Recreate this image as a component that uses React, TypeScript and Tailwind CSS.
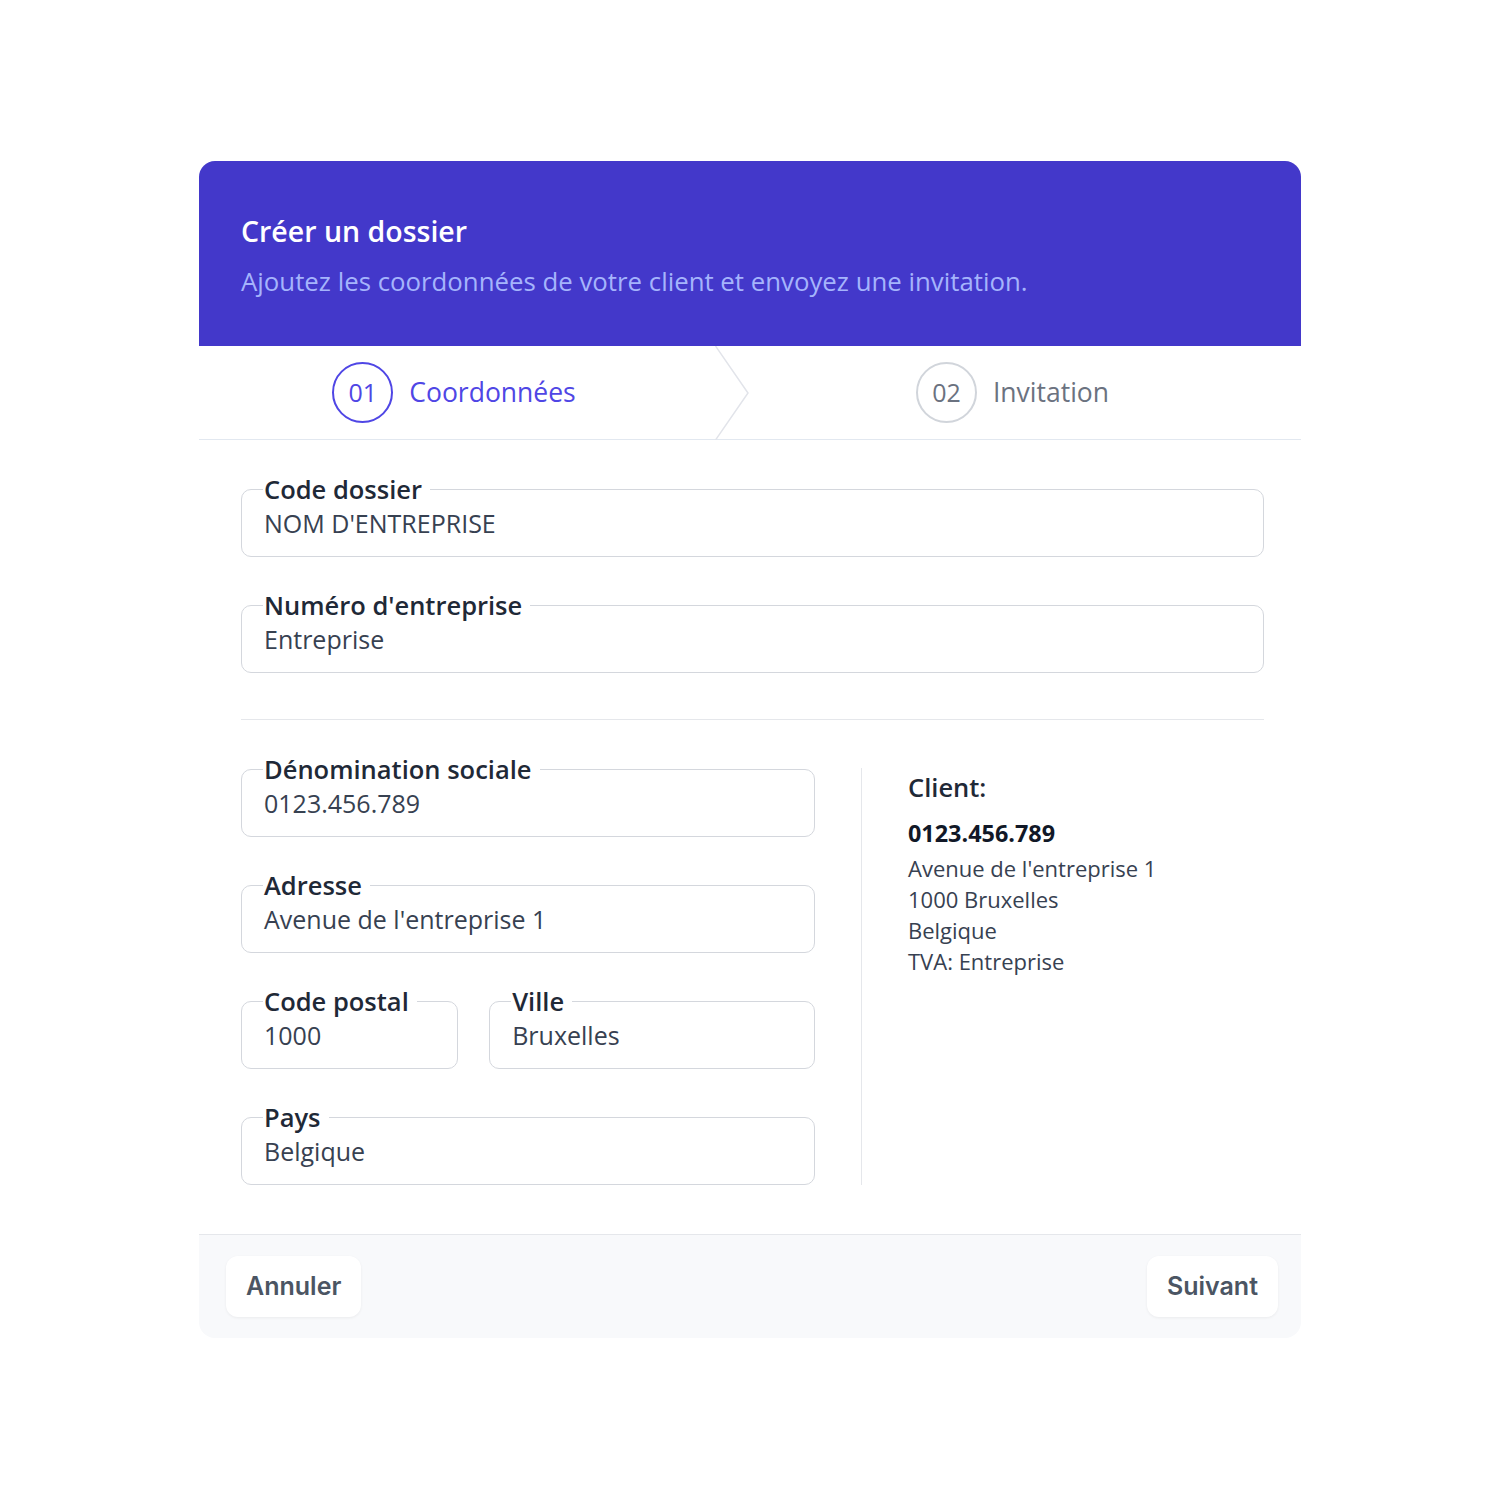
import React from 'react'

interface FieldProps {
  label: string
  value: string
  className?: string
}

function Field({ label, value, className = '' }: FieldProps) {
  return (
    <fieldset className={`rounded-[10px] border border-[#d4d7dd] px-[22px] pb-[16px] ${className}`}>
      <legend className="-ml-[1px] px-[1px] pr-[8px] text-[25.5px] font-semibold leading-[34px] text-[#1f2937]">
        {label}
      </legend>
      <div className="text-[25px] leading-[34px] text-[#374151]">{value}</div>
    </fieldset>
  )
}

function StepCircle({ n, active }: { n: string; active: boolean }) {
  return (
    <div
      className={`flex h-[61px] w-[61px] items-center justify-center rounded-full border-[2.5px] text-[25px] ${
        active ? 'border-[#4f46e5] text-[#4f46e5]' : 'border-[#d1d5db] text-[#6b7280]'
      }`}
    >
      {n}
    </div>
  )
}

export default function App() {
  return (
    <div className="min-h-[1500px] bg-white pt-[161px] font-['Open_Sans',sans-serif]">
      <div className="mx-auto w-[1102px]">
        {/* header */}
        <div className="h-[185px] rounded-t-2xl bg-[#4338ca] px-[42px] pt-[50px]">
          <h1 className="text-[28.5px] font-semibold leading-[40px] text-white">Créer un dossier</h1>
          <p className="mt-[13px] text-[25.8px] leading-[34px] text-[#a5b4fc]">
            Ajoutez les coordonnées de votre client et envoyez une invitation.
          </p>
        </div>

        {/* steps */}
        <div className="flex h-[94px] border-b border-[#e2e8f0]">
          <div className="flex w-[516px] items-center justify-center gap-[16px] pr-[6px]">
            <StepCircle n="01" active />
            <span className="text-[26.5px] font-medium text-[#4f46e5]">Coordonnées</span>
          </div>
          <svg width="34" height="94" viewBox="0 0 34 94" className="shrink-0">
            <path d="M0.5 0 L33 47 L0.5 94" fill="none" stroke="#e2e4ea" strokeWidth="1.5" />
          </svg>
          <div className="flex flex-1 items-center justify-center gap-[16px] pr-[25px]">
            <StepCircle n="02" active={false} />
            <span className="text-[26.5px] font-medium text-[#6b7280]">Invitation</span>
          </div>
        </div>

        {/* form */}
        <div className="pl-[42px] pr-[37px] pt-[32px] pb-[49px]">
          <div className="flex flex-col gap-[31px]">
            <Field label="Code dossier" value="NOM D'ENTREPRISE" />
            <Field label="Numéro d'entreprise" value="Entreprise" />
          </div>

          <div className="mt-[46px] mb-[32px] h-px bg-[#e5e7eb]" />

          <div className="flex">
            <div className="flex w-[574px] flex-col gap-[31px]">
              <Field label="Dénomination sociale" value="0123.456.789" />
              <Field label="Adresse" value="Avenue de l'entreprise 1" />
              <div className="grid grid-cols-[2fr_3fr] gap-[31px]">
                <Field label="Code postal" value="1000" />
                <Field label="Ville" value="Bruxelles" />
              </div>
              <Field label="Pays" value="Belgique" />
            </div>
            <div className="ml-[46px] mt-[16px] flex-1 border-l border-[#e5e7eb] pl-[46px] pt-[2px]">
              <div className="text-[25.5px] font-semibold leading-[34px] text-[#1f2937]">Client:</div>
              <div className="mt-[14px] mb-[4px] text-[23.4px] font-bold leading-[31px] text-[#111827]">
                0123.456.789
              </div>
              <div className="text-[22px] leading-[31px] text-[#374151]">
                <div>Avenue de l'entreprise 1</div>
                <div>1000 Bruxelles</div>
                <div>Belgique</div>
                <div>TVA: Entreprise</div>
              </div>
            </div>
          </div>
        </div>

        {/* footer */}
        <div className="flex h-[104px] items-center justify-between rounded-b-2xl border-t border-[#e5e7eb] bg-[#f8f9fb] pl-[27px] pr-[23px]">
          <button className="h-[61px] rounded-xl bg-white px-[20px] font-['Inter',sans-serif] text-[25px] font-semibold text-[#4b5563] shadow-[0_1px_3px_rgba(0,0,0,0.06)]">
            Annuler
          </button>
          <button className="h-[61px] rounded-xl bg-white px-[20px] font-['Inter',sans-serif] text-[25px] font-semibold text-[#4b5563] shadow-[0_1px_3px_rgba(0,0,0,0.06)]">
            Suivant
          </button>
        </div>
      </div>
    </div>
  )
}
